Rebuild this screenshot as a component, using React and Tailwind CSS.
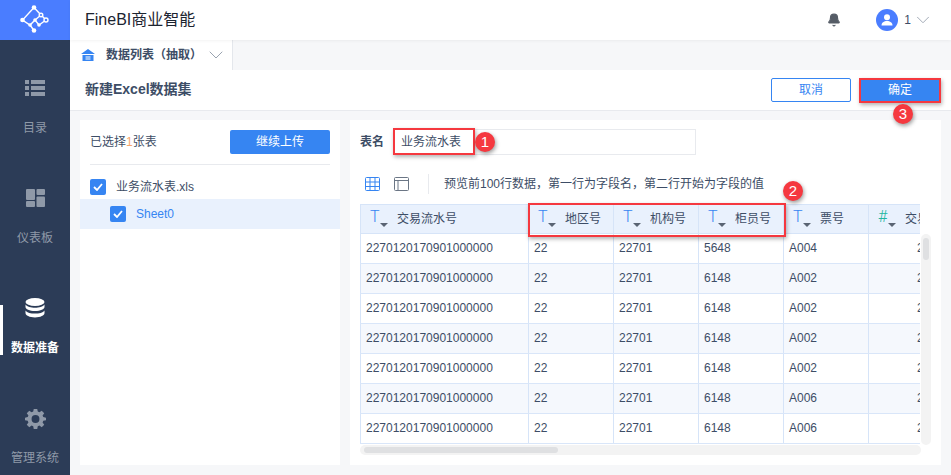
import React from "react";
import { Bell, ChevronDown } from "lucide-react";

const columns = [
  { label: "交易流水号", width: "w-[168px]", type: "T" },
  { label: "地区号", width: "w-[85px]", type: "T" },
  { label: "机构号", width: "w-[85px]", type: "T" },
  { label: "柜员号", width: "w-[85px]", type: "T" },
  { label: "票号", width: "w-[85px]", type: "T" },
  { label: "交易", width: "w-[85px]", type: "#" },
];

const rows = [
  ["5648", "A004"],
  ["6148", "A002"],
  ["6148", "A002"],
  ["6148", "A002"],
  ["6148", "A002"],
  ["6148", "A006"],
  ["6148", "A006"],
];

function Logo() {
  return (
    <svg width="30" height="30" viewBox="0 0 30 30" fill="none" stroke="#fff" strokeWidth="1.4">
      <path d="M14 2.500 L2.500 15 L10 20 L15 15 L19 20 L26 15 L21 10 M10 20 L14 25.500 M14 2.500 L21 10 L15 15" />
      <circle cx="14" cy="2.500" r="2.300" fill="#fff" stroke="none" />
      <circle cx="2.500" cy="15" r="2.300" fill="#fff" stroke="none" />
      <circle cx="14" cy="25.500" r="2.300" fill="#fff" stroke="none" />
      <circle cx="10" cy="20" r="1.800" fill="#fff" stroke="none" />
      <circle cx="15" cy="15" r="1.800" fill="#fff" stroke="none" />
      <circle cx="19" cy="20" r="1.800" fill="#fff" stroke="none" />
      <circle cx="26" cy="15" r="2" fill="#4a7dff" />
      <circle cx="21" cy="10" r="1.800" fill="#4a7dff" />
    </svg>
  );
}

function ListIcon() {
  return (
    <svg width="20" height="16" viewBox="0 0 20 16" fill="#8f99a8">
      <rect x="0" y="0" width="4" height="4" />
      <rect x="6" y="0" width="14" height="4" />
      <rect x="0" y="6" width="4" height="4" />
      <rect x="6" y="6" width="14" height="4" />
      <rect x="0" y="12" width="4" height="4" />
      <rect x="6" y="12" width="14" height="4" />
    </svg>
  );
}

function BoardIcon() {
  return (
    <svg width="19" height="18" viewBox="0 0 19 18" fill="#8f99a8">
      <rect x="0" y="0" width="9" height="11" rx="1" />
      <rect x="10.500" y="0" width="8.500" height="6" rx="1" />
      <rect x="0" y="12" width="9" height="6" rx="1" />
      <rect x="10.500" y="7.500" width="8.500" height="10.500" rx="1" />
    </svg>
  );
}

function DatabaseIcon() {
  return (
    <svg width="20" height="20" viewBox="0 0 20 20" fill="#fff">
      <ellipse cx="10" cy="4" rx="9.500" ry="4" />
      <path d="M.5 6.600C2 9 6 9.800 10 9.800s8-.8 9.500-3.200V9c0 2-4 4-9.500 4S.5 11 .5 9z" />
      <path d="M.5 12.400C2 14.800 6 15.600 10 15.600s8-.8 9.500-3.200V15c0 2.400-4 4.400-9.500 4.400S.5 17.400.5 15z" />
    </svg>
  );
}

function GearIcon() {
  return (
    <svg width="21" height="21" viewBox="0 0 24 24" fill="#8f99a8">
      <path
        fillRule="evenodd"
        d="M10 1h4l.6 3.100 1.900.8L19.100 3l2.900 2.900-1.900 2.600.8 1.900L24 11v3l-3.100.6-.8 1.900 1.900 2.600-2.900 2.900-2.600-1.900-1.900.8L14 24h-4l-.6-3.100-1.900-.8L4.900 22 2 19.100l1.900-2.600-.8-1.900L0 14v-3l3.100-.6.8-1.900L2 5.900 4.900 3l2.600 1.900 1.900-.8zM12 8a4.500 4.500 0 1 0 0 9 4.500 4.500 0 0 0 0-9z"
      />
    </svg>
  );
}

function NavItem({ icon, label, active, className }) {
  return (
    <div className={`relative flex flex-col items-center ${className}`}>
      {active && <div className="absolute left-0 top-[7px] w-[3px] h-[50px] bg-white" />}
      <div className="h-5 flex items-center justify-center">{icon}</div>
      <div className={`mt-[21px] text-[12px] leading-[18px] ${active ? "text-white font-bold" : "text-[#8f99a8]"}`}>{label}</div>
    </div>
  );
}

function Check() {
  return (
    <div className="w-4 h-4 rounded-[2px] bg-[#3685f2] flex items-center justify-center shrink-0">
      <svg width="10" height="8" viewBox="0 0 10 8" fill="none" stroke="#fff" strokeWidth="1.8">
        <path d="M1 4l3 3 5-6" />
      </svg>
    </div>
  );
}

function TypeMark({ type }) {
  return (
    <span className="relative w-[22px] h-5 shrink-0">
      <span className={`absolute left-0 top-[-2px] text-[16px] leading-5 font-light font-['Roboto',sans-serif] ${type === "#" ? "text-[#21b6a0]" : "text-[#3685f2]"}`}>{type}</span>
      <span className="absolute left-[10px] top-[14px] w-0 h-0 border-x-[4px] border-x-transparent border-t-[4px] border-t-[#5a6473]" />
    </span>
  );
}

function Badge({ n, className }) {
  return (
    <div className={`absolute w-5 h-5 rounded-full bg-[#f5383f] text-white text-[15px] leading-5 text-center shadow-[1px_2px_4px_rgba(0,0,0,0.4)] ${className}`}>
      {n}
    </div>
  );
}

export default function App() {
  return (
    <div className="relative w-[951px] h-[475px] overflow-hidden flex bg-[#f6f7f9] text-[#3d4d66] text-[12px] font-['Liberation_Sans','Noto_Sans_CJK_SC',sans-serif]">
      {/* sidebar */}
      <div className="w-[70px] shrink-0 bg-[#2c3c57] flex flex-col">
        <div className="h-10 bg-[#4a7dff] flex items-center justify-center">
          <Logo />
        </div>
        <NavItem className="mt-[38px]" icon={<ListIcon />} label="目录" />
        <NavItem className="mt-[51px]" icon={<BoardIcon />} label="仪表板" />
        <NavItem className="mt-[51px]" icon={<DatabaseIcon />} label="数据准备" active />
        <NavItem className="mt-[51px]" icon={<GearIcon />} label="管理系统" />
      </div>

      <div className="flex-1 flex flex-col min-w-0">
        {/* top bar */}
        <div className="h-10 bg-white flex items-center pl-[15px] pr-[17px] z-10 shadow-[0_1px_3px_rgba(0,0,0,0.05)]">
          <div className="text-[16px] text-[#1c2430]">FineBI商业智能</div>
          <Bell size={14} className="ml-auto text-[#555c66]" fill="#555c66" />
          <div className="ml-[35px] w-[22px] h-[22px] rounded-full bg-[#4a7dff] flex items-center justify-center">
            <svg width="12" height="12" viewBox="0 0 12 12" fill="#fff">
              <circle cx="6" cy="3.200" r="3" />
              <path d="M0.500 11.500c0-3 2.500-4.500 5.500-4.500s5.500 1.500 5.500 4.500z" />
            </svg>
          </div>
          <span className="ml-[6px] text-[12px] text-[#3d4d66]">1</span>
          <ChevronDown size={22} strokeWidth={1} className="ml-[1px] text-[#9aa3b0]" />
        </div>

        {/* tab strip */}
        <div className="h-[30px] flex bg-[#f6f7f9]">
          <div className="w-[163px] bg-white border-r border-[#e4e7ec] flex items-center pl-[11px]">
            <svg width="14" height="12" viewBox="0 0 14 12" fill="#3685f2">
              <path fillRule="evenodd" d="M7 0l7 5H0zM1.500 6h11v6h-11zM4.500 7.500v1h5v-1zM4.500 9.500v1h5v-1z" />
            </svg>
            <span className="ml-[11px] text-[12px] font-bold">数据列表（抽取）</span>
            <ChevronDown size={24} strokeWidth={1} className="ml-[2px] text-[#9aa3b0]" />
          </div>
        </div>

        {/* title bar */}
        <div className="h-[41px] bg-white border-b border-[#e8eaee] flex items-center pl-[15px] pr-[11px] pb-[1px]">
          <div className="text-[14px] font-bold">新建Excel数据集</div>
          <button className="ml-auto w-[80px] h-6 rounded-[2px] border border-[#3685f2] text-[#3685f2] text-[12px]">取消</button>
          <button className="ml-[9px] w-[80px] h-6 rounded-[2px] bg-[#3685f2] text-white text-[12px]">确定</button>
        </div>

        {/* body */}
        <div className="flex-1 flex gap-[10px] px-[10px] pt-[9px] pb-[10px] min-h-0">
          <div className="w-[260px] bg-white flex flex-col">
            <div className="mx-[10px] h-[45px] border-b border-[#e8eaee] flex items-center justify-between">
              <div>已选择<span className="text-[#f7a66b]">1</span>张表</div>
              <button className="w-[100px] h-6 rounded-[2px] bg-[#3685f2] text-white text-[12px]">继续上传</button>
            </div>
            <div className="h-[34px] pl-[10px] flex items-center gap-[10px] pt-[10px]">
              <Check />
              <span>业务流水表.xls</span>
            </div>
            <div className="h-[30px] bg-[#e9f1fd] pl-[30px] flex items-center gap-[10px] text-[#3685f2]">
              <Check />
              <span>Sheet0</span>
            </div>
          </div>

          <div className="flex-1 bg-white pl-[10px] pr-[10px] flex flex-col min-w-0">
            <div className="h-[45px] pt-[9px] flex items-start">
              <span className="font-bold leading-[26px] w-[33px]">表名</span>
              <div className="w-[303px] h-[26px] border border-[#e8eaee] leading-[24px] pl-[7px]">业务流水表</div>
            </div>
            <div className="h-[39px] flex items-center pb-[2px]">
              <svg width="15" height="14" viewBox="0 0 15 14" fill="none" stroke="#3685f2" className="ml-[5px]">
                <rect x="0.500" y="0.500" width="14" height="13" rx="1" />
                <path d="M5 .5v13M10 .5v13M.5 5h14M.5 9.500h14" />
              </svg>
              <svg width="15" height="14" viewBox="0 0 15 14" fill="none" stroke="#6b7685" className="ml-[14px]">
                <rect x="0.500" y="0.500" width="14" height="13" rx="1" />
                <path d="M.5 3.500h14M4 3.500v10" />
              </svg>
              <div className="ml-[19px] w-px h-5 bg-[#e8eaee]" />
              <span className="ml-[15px]">预览前100行数据，第一行为字段名，第二行开始为字段的值</span>
            </div>

            {/* table */}
            <div className="w-[560px] h-[241px] overflow-hidden">
              <div className="w-[593px]">
                <div className="flex h-[30px] bg-[#e9f1fd] border-y border-[#d6e4f8]">
                  {columns.map((c) => (
                    <div key={c.label} className={`${c.width} shrink-0 flex items-center pl-[9px] border-l border-[#d6e4f8]`}>
                      <TypeMark type={c.type} />
                      <span className="ml-[5px] whitespace-nowrap">{c.label}</span>
                    </div>
                  ))}
                </div>
                {rows.map((r, i) => (
                  <div key={i} className={`flex h-[30px] border-b border-[#d9e6f9] ${i % 2 === 1 ? "bg-[#f5f8fd]" : "bg-white"}`}>
                    <div className="w-[168px] shrink-0 pl-[5px] leading-[29px] border-l border-[#d6e4f8]">2270120170901000000</div>
                    <div className="w-[85px] shrink-0 pl-[5px] leading-[29px] border-l border-[#d6e4f8]">22</div>
                    <div className="w-[85px] shrink-0 pl-[5px] leading-[29px] border-l border-[#d6e4f8]">22701</div>
                    <div className="w-[85px] shrink-0 pl-[5px] leading-[29px] border-l border-[#d6e4f8]">{r[0]}</div>
                    <div className="w-[85px] shrink-0 pl-[5px] leading-[29px] border-l border-[#d6e4f8]">{r[1]}</div>
                    <div className="w-[85px] shrink-0 pl-[48px] leading-[29px] border-l border-[#d6e4f8]">2</div>
                  </div>
                ))}
              </div>
            </div>
            {/* horizontal scrollbar */}
            <div className="w-[561px] h-[10px] rounded-[5px] bg-[#f3f3f3] flex items-center pl-[4px]">
              <div className="w-[194px] h-[6px] rounded-[3px] bg-[#dfe0e2]" />
            </div>
          </div>
        </div>
      </div>

      {/* vertical scrollbar */}
      <div className="absolute left-[921px] top-[234px] w-[10px] h-[211px] rounded-[5px] bg-[#f3f3f3]">
        <div className="ml-[2px] mt-[4px] w-[6px] h-[22px] rounded-[3px] bg-[#dfe0e2]" />
      </div>

      {/* annotations */}
      <div className="absolute left-[393px] top-[128px] w-[82px] h-[27px] border-2 border-[#f5383f] shadow-[1px_2px_4px_rgba(0,0,0,0.3)]" />
      <div className="absolute left-[528px] top-[203px] w-[258px] h-[34px] border-2 border-[#f5383f] shadow-[1px_2px_4px_rgba(0,0,0,0.3)]" />
      <div className="absolute left-[859px] top-[78px] w-[82px] h-[25px] border-2 border-[#f5383f] shadow-[1px_2px_4px_rgba(0,0,0,0.3)]" />
      <Badge n="1" className="left-[475px] top-[132px]" />
      <Badge n="2" className="left-[783px] top-[181px]" />
      <Badge n="3" className="left-[893px] top-[104px]" />
    </div>
  );
}
